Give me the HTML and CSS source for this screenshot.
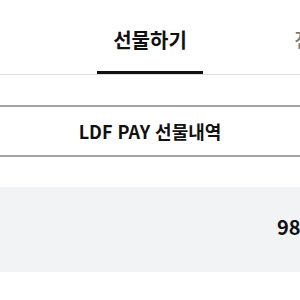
FILE: index.html
```html
<!DOCTYPE html>
<html lang="ko">
<head>
  <meta charset="UTF-8">
  <title>선물하기</title>
  <meta name="viewport" content="width=device-width, initial-scale=1.0">
  <link rel="stylesheet" href="styles.css">
</head>
<body>
  <div class="tabs">
    <div class="tab active">선물하기</div>
    <div class="tab">전환하기</div>
  </div>

  <button class="history-btn">LDF PAY 선물내역</button>

  <div class="balance">
    <span class="amount">98,000</span>
  </div>
</body>
</html>
```

FILE: styles.css
```css
html, body { overflow: hidden; }
body { margin: 0; width: 300px; font-family: "Noto Sans CJK KR", "Noto Sans", sans-serif; color: #111; background: #fff; }

.tabs { display: flex; height: 74px; border-bottom: 1px solid #ddd; padding-left: 97px; gap: 75px; white-space: nowrap; }
.tab { width: 106px; flex-shrink: 0; text-align: center; padding-top: 25px; font-size: 20px; font-weight: 500; color: #777; box-sizing: border-box; }
.tab.active { color: #111; font-weight: 700; border-bottom: 3px solid #111; }

.history-btn { display: block; width: 340px; margin: 30px 0 0 -20px; height: 52px; background: #fff; border: none; border-top: 2px solid #a3a3a3; border-bottom: 2px solid #a3a3a3; font-family: inherit; font-size: 18px; font-weight: 700; color: #111; }

.balance { display: flex; align-items: center; width: 400px; height: 85px; margin-top: 30px; padding-left: 277px; padding-bottom: 6px; box-sizing: border-box; background: #f2f3f5; }
.amount { font-size: 20px; font-weight: 700; white-space: nowrap; }
```
